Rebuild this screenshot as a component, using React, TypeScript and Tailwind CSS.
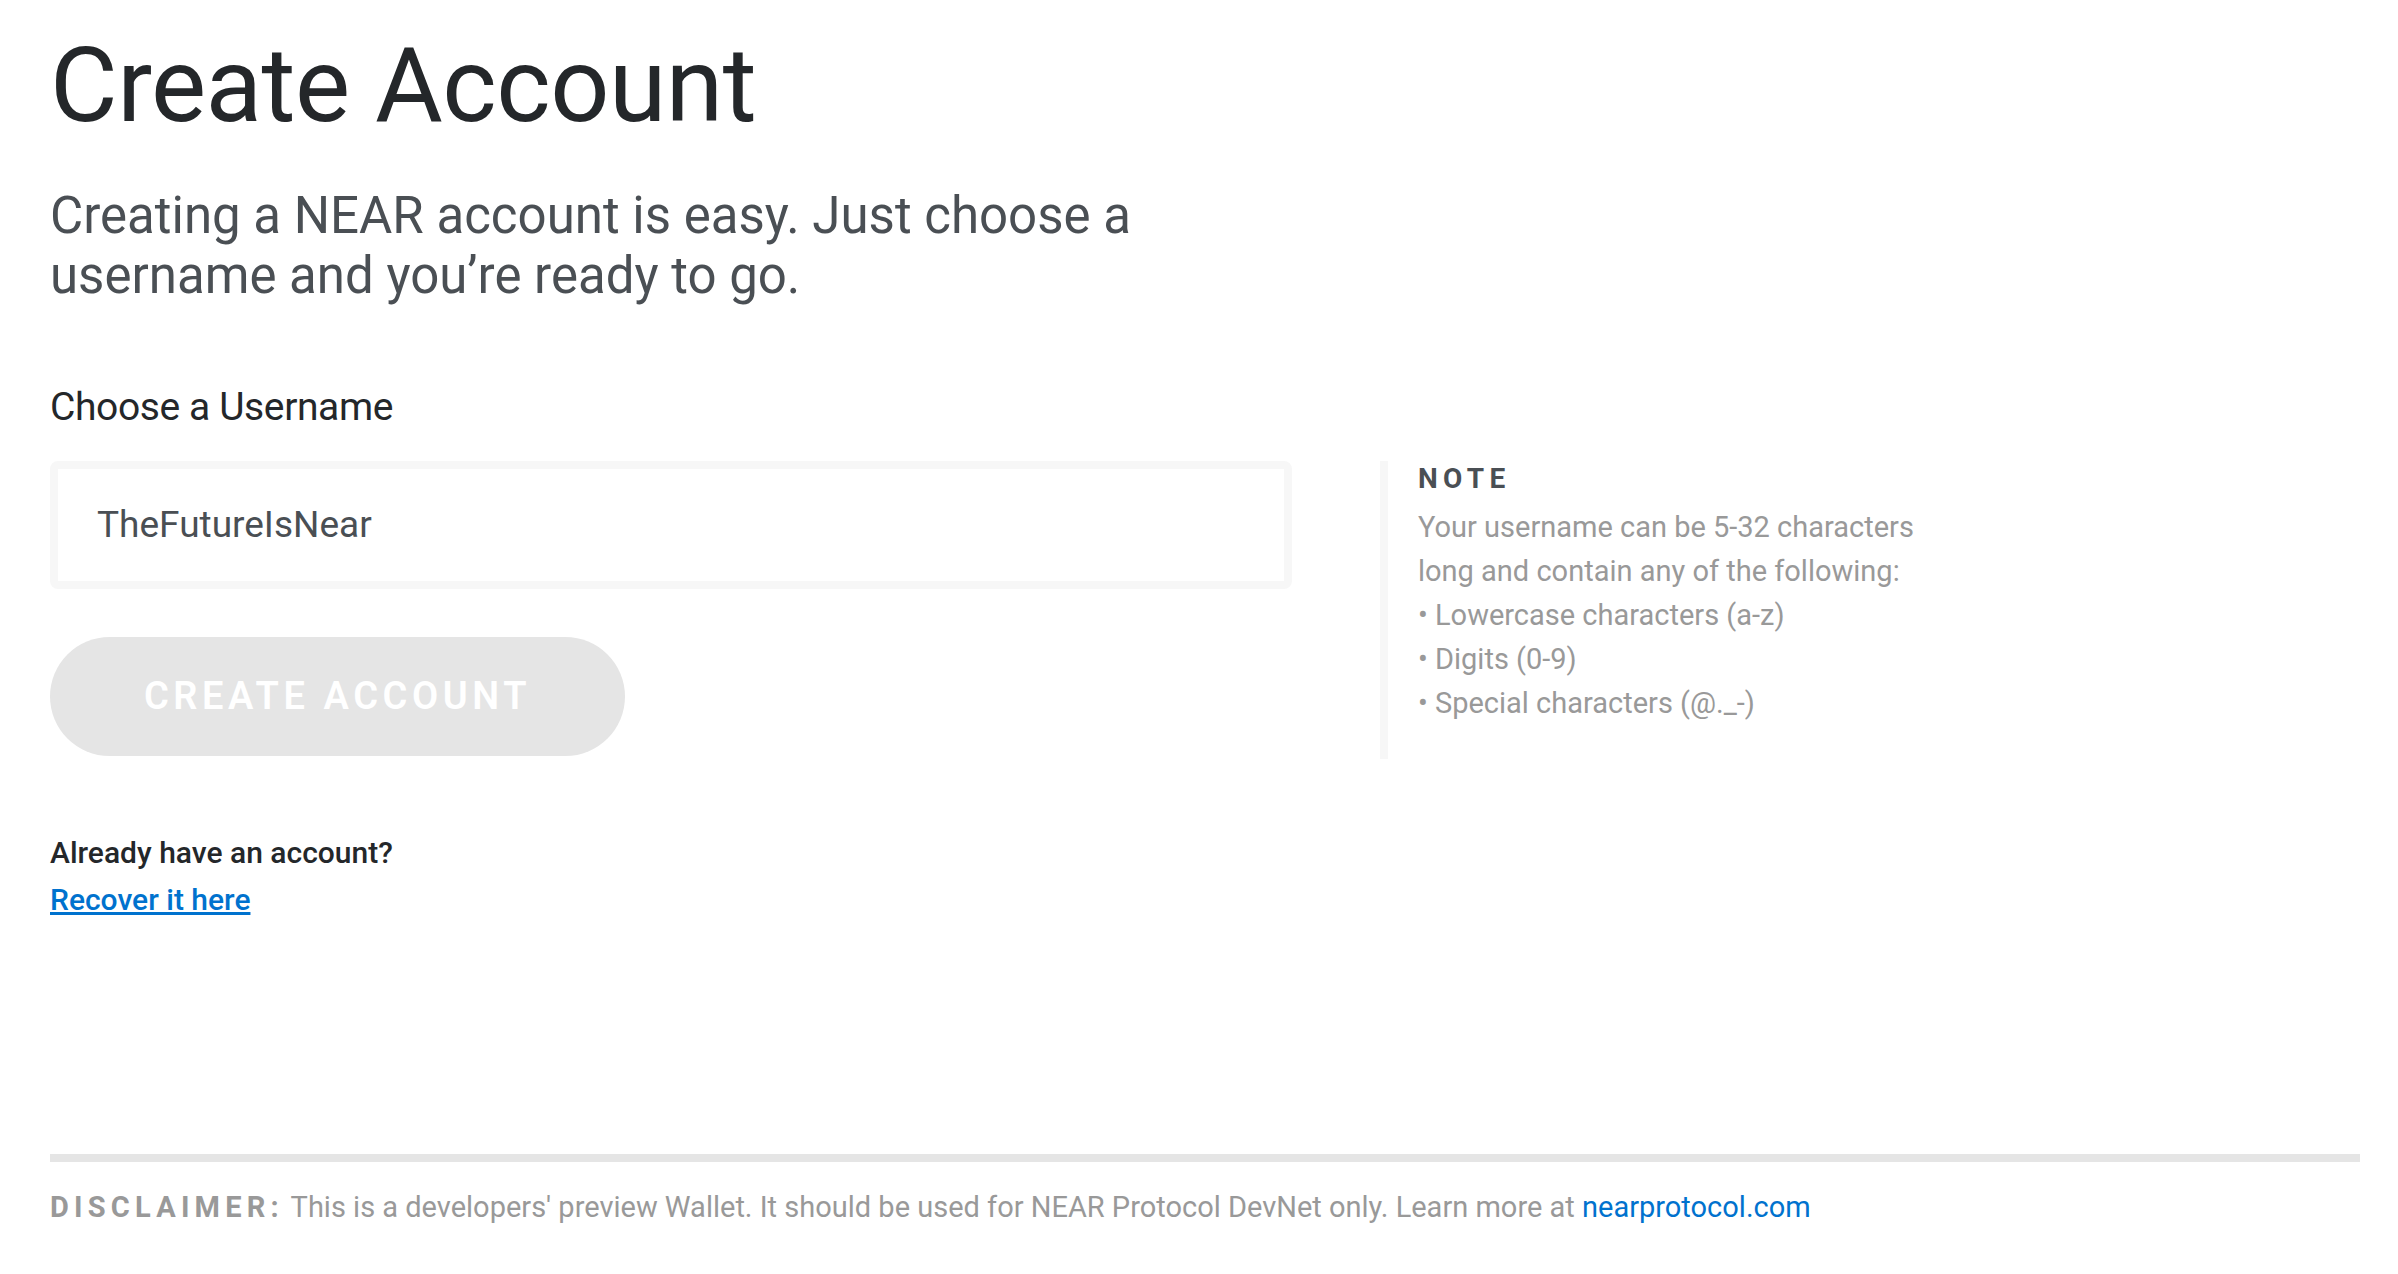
import React from 'react';

/**
 * Create Account page
 * Username form with a side note and a disclaimer footer
 */
export default function App() {
  return (
    <div className="min-h-screen bg-white pl-[50px] pr-[38px] font-['Roboto',sans-serif]">
      {/* Page Header */}
      <h1 className="pt-[34px] text-[104px] leading-[104px] tracking-[-0.005em] text-[#24272a]">
        Create Account
      </h1>
      <p className="mt-[48px] text-[51px] leading-[60px] text-[#4a4f54]">
        Creating a NEAR account is easy. Just choose a
        <br />
        username and you’re ready to go.
      </p>

      {/* Username Form */}
      <h2 className="mt-[77px] text-[39px] leading-[48px] tracking-[-0.01em] text-[#24272a]">
        Choose a Username
      </h2>
      <div className="mt-[30px] flex items-start">
        <div className="w-[1242px]">
          <div className="flex h-[128px] items-center rounded-[8px] border-[8px] border-[#f7f7f7] pl-[39px] text-[37px] text-[#4a4f54]">
            TheFutureIsNear
          </div>
          <button
            disabled
            className="mt-[48px] flex h-[119px] w-[575px] items-center justify-center rounded-full bg-[#e5e5e5] text-[38px] font-semibold tracking-[0.12em] text-white"
          >
            CREATE ACCOUNT
          </button>
        </div>

        {/* Note */}
        <div className="ml-[88px] h-[298px] border-l-[8px] border-[#f7f7f7] pl-[30px]">
          <div className="text-[28px] font-bold leading-[36px] tracking-[0.19em] text-[#4a4f54]">
            NOTE
          </div>
          <div className="mt-[8px] text-[29px] leading-[44px] text-[#999999]">
            Your username can be 5-32 characters
            <br />
            long and contain any of the following:
            <br />• Lowercase characters (a-z)
            <br />• Digits (0-9)
            <br />• Special characters (@._-)
          </div>
        </div>
      </div>

      {/* Recover */}
      <div className="mt-[76px] text-[30px] font-medium leading-[36px] text-[#24272a]">
        Already have an account?
      </div>
      <a href="#" className="mt-[11px] block w-fit text-[30px] font-medium leading-[36px] text-[#0072ce] underline">
        Recover it here
      </a>

      {/* Disclaimer */}
      <div className="mt-[236px] h-[8px] bg-[#e5e5e5]" />
      <p className="mt-[27px] text-[29px] leading-[36px] text-[#999999]">
        <span className="font-bold tracking-[0.18em]">DISCLAIMER:</span> This is a developers' preview
        Wallet. It should be used for NEAR Protocol DevNet only. Learn more at{' '}
        <a href="#" className="text-[#0072ce]">
          nearprotocol.com
        </a>
      </p>
    </div>
  );
}
